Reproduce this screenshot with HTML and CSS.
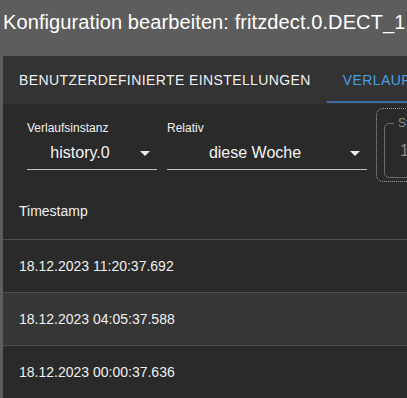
FILE: index.html
```html
<!DOCTYPE html>
<html lang="de">
<head>
    <meta charset="UTF-8">
    <title>Konfiguration bearbeiten</title>
    <link rel="stylesheet" href="styles.css">
</head>
<body>
    <div class="dialog-title">Konfiguration bearbeiten: fritzdect.0.DECT_1</div>

    <div class="panel">
        <div class="tabs">
            <div class="tab">Benutzerdefinierte Einstellungen</div>
            <div class="tab active">Verlauf</div>
        </div>

        <div class="controls">
            <div class="field field-instance">
                <div class="field-label">Verlaufsinstanz</div>
                <div class="select">
                    <span class="select-value">history.0</span>
                    <svg class="select-icon" viewBox="0 0 24 24"><path d="M7 10l5 5 5-5z"/></svg>
                </div>
            </div>
            <div class="field field-relative">
                <div class="field-label">Relativ</div>
                <div class="select">
                    <span class="select-value">diese Woche</span>
                    <svg class="select-icon" viewBox="0 0 24 24"><path d="M7 10l5 5 5-5z"/></svg>
                </div>
            </div>
            <div class="picker">
                <div class="picker-field">
                    <span class="picker-label">Start</span>
                    <span class="picker-value">18.12.2023</span>
                </div>
            </div>
        </div>

        <div class="table">
            <div class="row head">Timestamp</div>
            <div class="row">18.12.2023 11:20:37.692</div>
            <div class="row alt">18.12.2023 04:05:37.588</div>
            <div class="row">18.12.2023 00:00:37.636</div>
        </div>
    </div>
</body>
</html>
```

FILE: styles.css
```css
* {
    margin: 0;
    padding: 0;
    box-sizing: border-box;
}

body {
    font-family: 'Liberation Sans', Arial, sans-serif;
    background: #5d5d5d;
    color: #fff;
    overflow: hidden;
    height: 398px;
}

.dialog-title {
    height: 56px;
    padding: 10px 0 0 3px;
    font-size: 20px;
    line-height: 24px;
    letter-spacing: 0.1px;
    white-space: nowrap;
    color: #fff;
}

.panel {
    margin-left: 3px;
    width: 600px;
    background: #2a2a2a;
    min-height: 400px;
}

.tabs {
    display: flex;
    height: 48px;
    background: #333333;
}

.tab {
    padding: 0 16px;
    line-height: 48px;
    font-size: 14px;
    letter-spacing: 0.4px;
    text-transform: uppercase;
    color: #f0f0f0;
    white-space: nowrap;
    position: relative;
}

.tab.active {
    color: #4a9fe3;
}

.tab.active::after {
    content: '';
    position: absolute;
    left: 0;
    right: 0;
    bottom: 1px;
    height: 2px;
    background: #3f6fa3;
}

.controls {
    display: flex;
    align-items: flex-start;
    padding: 4px 0 0 24px;
    height: 78px;
}

.field {
    margin-top: 13px;
    margin-right: 10px;
}

.field-instance {
    width: 130px;
}

.field-relative {
    width: 200px;
}

.field-label {
    font-size: 12px;
    line-height: 14px;
    color: #f2f2f2;
}

.select {
    position: relative;
    height: 35px;
    border-bottom: 1px solid #c4c4c4;
    padding-right: 24px;
    display: flex;
    align-items: center;
    justify-content: center;
}

.select-value {
    font-size: 16px;
    color: #f4f4f4;
    margin-top: 1px;
}

.select-icon {
    position: absolute;
    right: 0;
    top: 6px;
    width: 24px;
    height: 24px;
    fill: #ececec;
}

.picker {
    margin-left: -1px;
    width: 120px;
    height: 74px;
    border: 1px dotted #a8a8a8;
    border-radius: 7px;
    padding: 14px 0 0 7px;
}

.picker-field {
    position: relative;
    height: 55px;
    border: 1px solid #6c6c6c;
    border-radius: 5px;
    padding: 0 0 0 15px;
    display: flex;
    align-items: center;
}

.picker-label {
    position: absolute;
    left: 9px;
    top: -8px;
    padding: 0 4px;
    background: #2a2a2a;
    font-size: 12px;
    line-height: 14px;
    color: #8c8c8c;
}

.picker-value {
    font-size: 16px;
    color: #8c8c8c;
    white-space: nowrap;
}

.table {
    margin-top: 3px;
}

.row {
    height: 53px;
    padding-left: 16px;
    border-bottom: 1px solid #4e4e4e;
    display: flex;
    align-items: center;
    font-size: 14px;
    color: #f0f0f0;
}

.row.head {
    height: 55px;
    padding-bottom: 2px;
}

.row.alt {
    background: #363636;
}
```
